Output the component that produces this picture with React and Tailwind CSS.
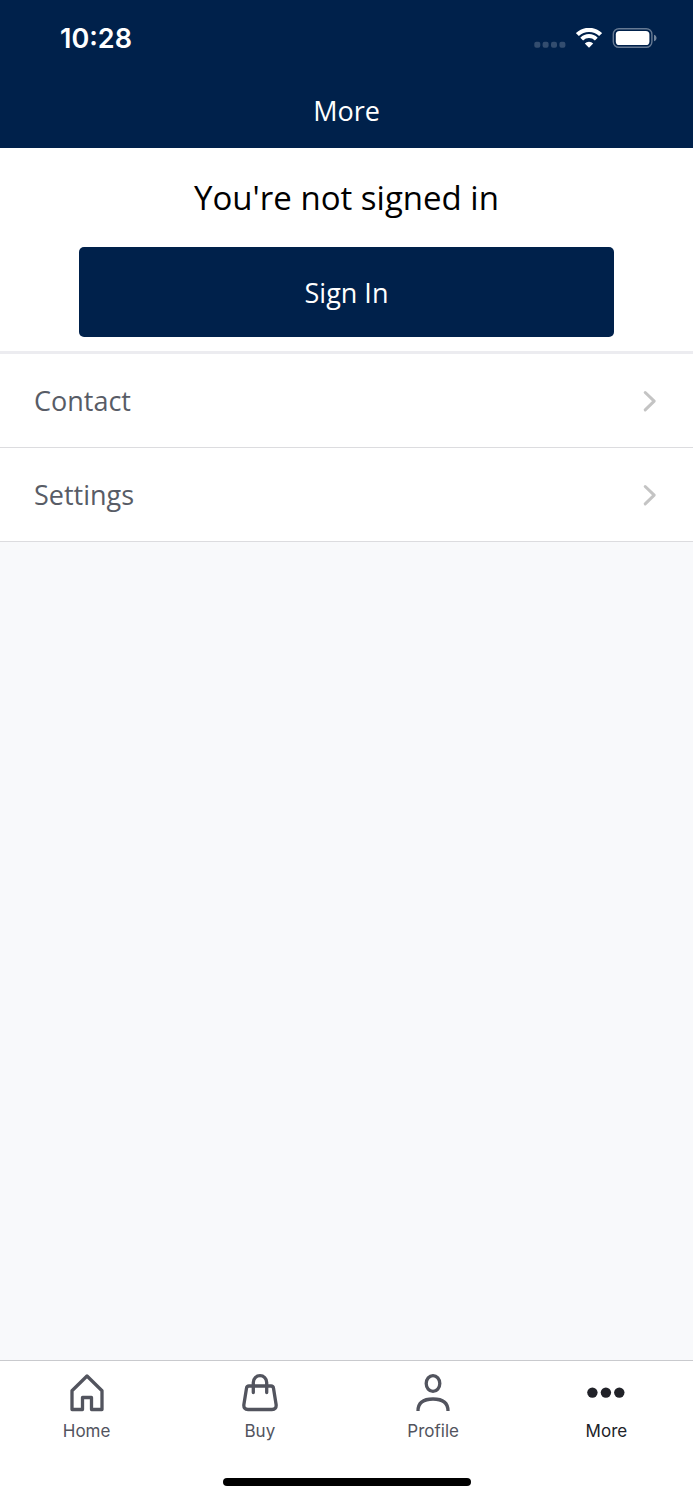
import React from "react";

function StatusBar() {
  return (
    <div className="flex h-[76px] items-center justify-between pl-[60px] pr-9 font-['Inter',sans-serif]">
      <time className="pt-0.5 text-[27px] font-semibold leading-8">10:28</time>
      <div className="flex items-center gap-[10px]" aria-hidden="true">
        <svg className="h-5 w-8" viewBox="0 0 32 20" fill="#fff" fillOpacity="0.2">
          <rect x="0.3" y="13.7" width="6" height="6" rx="2" />
          <rect x="8.6" y="13.7" width="6" height="6" rx="2" />
          <rect x="17" y="13.7" width="6" height="6" rx="2" />
          <rect x="25.4" y="13.7" width="6" height="6" rx="2" />
        </svg>
        <svg className="h-5 w-[26px]" viewBox="0 0 26 20" fill="none">
          <path d="M1.4 6.6a16.6 16.6 0 0 1 23.2 0" stroke="#fff" strokeWidth="4.2" />
          <path d="M5.7 11.1a10.4 10.4 0 0 1 14.6 0" stroke="#fff" strokeWidth="4" />
          <path d="M13 19.8l-4.200-4.200a5.800 5.800 0 0 1 8.400 0z" fill="#fff" />
        </svg>
        <svg className="h-5 w-[45px]" viewBox="0 0 45 20" fill="none">
          <rect x="1.3" y="0.7" width="38.6" height="18.6" rx="5.6" stroke="#fff" strokeOpacity="0.4" strokeWidth="1.4" />
          <rect x="3.8" y="3" width="33.6" height="14" rx="3.6" fill="#fff" />
          <path d="M42 6.7c1.7.6 2.5 1.8 2.5 3.3s-.8 2.700-2.500 3.300z" fill="#fff" fillOpacity="0.45" />
        </svg>
      </div>
    </div>
  );
}

function MenuRow({ label }) {
  return (
    <li className="border-b border-[#dcdcdf]">
      <a href="#" className="flex h-[93px] items-center justify-between pl-[34px] pr-9 text-[27px] leading-9 text-[#585c66]">
        {label}
        <svg className="h-6 w-[14px]" viewBox="0 0 14 24" fill="none" stroke="#c4c4c4" strokeWidth="3" strokeLinecap="round" strokeLinejoin="round" aria-hidden="true">
          <path d="M2.200 3.500L11.200 12.200L2.200 20.900" />
        </svg>
      </a>
    </li>
  );
}

const tabs = [
  {
    label: "Home",
    icon: <path strokeLinejoin="round" d="M5 18.700L20 4L35 18.700V37.500H24.500V25.500H15.500V37.500H5Z" />,
  },
  {
    label: "Buy",
    icon: (
      <>
        <path strokeLinejoin="round" d="M9 14H31C32.600 14 33.300 14.800 33.500 16.200L36.100 32.500C36.500 35.500 35 37.500 32 37.500H8C5 37.500 3.500 35.500 3.900 32.500L6.500 16.200C6.700 14.800 7.400 14 9 14Z" />
        <path strokeLinecap="round" d="M13.300 20.600V10.400A6.700 6.700 0 0 1 26.700 10.400V20.600" />
      </>
    ),
  },
  {
    label: "Profile",
    icon: (
      <>
        <ellipse cx="20" cy="11.500" rx="6.800" ry="7.900" />
        <path d="M5 39C5 31 10.500 27 20 27S35 31 35 39" />
      </>
    ),
  },
  {
    label: "More",
    active: true,
    icon: (
      <g fill="currentColor" stroke="none">
        <circle cx="6.400" cy="20.600" r="5.200" />
        <circle cx="19.900" cy="20.600" r="5.200" />
        <circle cx="33.300" cy="20.600" r="5.200" />
      </g>
    ),
  },
];

function TabBar() {
  return (
    <footer className="border-t border-[#c9cace] bg-white">
      <nav className="grid grid-cols-4 pt-[11px] font-['Inter',sans-serif]">
        {tabs.map(({ label, icon, active }) => (
          <a
            key={label}
            href="#"
            aria-current={active ? "page" : undefined}
            className={`flex flex-col items-center gap-2 text-[17px] leading-[22px] ${active ? "text-[#212228]" : "text-[#52545e]"}`}
          >
            <svg className="size-10" viewBox="0 0 40 40" fill="none" stroke="currentColor" strokeWidth="3.300" aria-hidden="true">
              {icon}
            </svg>
            {label}
          </a>
        ))}
      </nav>
      <div className="mx-auto mb-[14px] mt-9 h-2 w-[248px] rounded-full bg-black" />
    </footer>
  );
}

export default function App() {
  return (
    <div className="flex min-h-screen flex-col bg-[#f8f9fb] font-['Open_Sans',sans-serif]">
      <header className="bg-[#00214b] text-white">
        <StatusBar />
        <h1 className="h-[72px] pt-[17px] text-center text-[27px] leading-9">More</h1>
      </header>
      <main className="flex-1">
        <section className="flex flex-col items-center bg-white px-[79px] pb-[14px] pt-[26px]">
          <h2 className="text-center text-[33px] leading-[48px] text-black">You're not signed in</h2>
          <button type="button" className="mt-[25px] h-[90px] w-full rounded-[5px] bg-[#00214b] pt-0.5 text-[27px] leading-9 text-white">
            Sign In
          </button>
        </section>
        <ul className="border-t-[3px] border-[#ececf0] bg-white">
          <MenuRow label="Contact" />
          <MenuRow label="Settings" />
        </ul>
      </main>
      <TabBar />
    </div>
  );
}
